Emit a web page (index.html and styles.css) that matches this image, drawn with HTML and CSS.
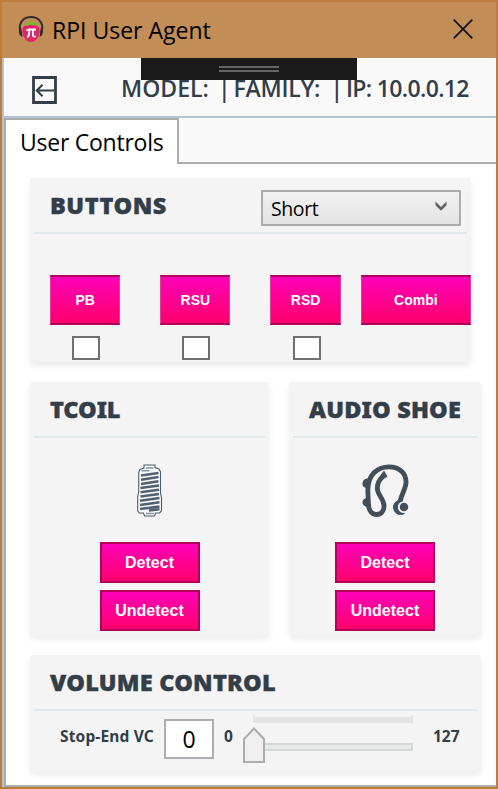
FILE: index.html
```html
<!DOCTYPE html>
<html lang="en">
<head>
<meta charset="utf-8">
<title>RPI User Agent</title>
<link rel="stylesheet" href="styles.css">
</head>
<body>
<div class="window">
  <header class="titlebar">
    <svg class="app-icon" width="26" height="28" viewBox="0 0 26 28">
      <path d="M3 18C-1 9 5 2 13 2s14 7 10 16" fill="none" stroke="#33302d" stroke-width="2"/>
      <path d="M3 12.500C0 14 .5 21 4.500 22zM23 12.500c3 1.500 2.500 8.500-1.500 9.500z" fill="#292b2c"/>
      <path d="M4.500 14c0-3 4-4 8.500-4s8.500 1 8.500 4c1 7-4 13-8.500 13S3.500 21 4.500 14z" fill="#e02468"/>
      <path d="M6 9.500l3-2 1 .3L13 5.500l3 2.300 1-.3 3 2-3.500 1-3.500-1-3.500 1z" fill="#77b82e"/>
      <path d="M8 15q1-1.500 3-1.500h7v2h-2v4.500q0 1.500 2 .5v1.500q-4 1.500-4-2v-4.500h-1.700q0 4.500-1.500 7H8.700Q10.500 19.500 10.400 15.500 9 15.500 8.500 16.300z" fill="#fff"/>
    </svg>
    <h1 class="title">RPI User Agent</h1>
    <svg class="close" width="20" height="20" viewBox="0 0 20 20"><path d="M.7.7l18.600 18.600M19.300.7L.7 19.300" stroke="#111" stroke-width="1.700"/></svg>
  </header>
  <div class="client">
    <div class="infobar">
      <svg class="back" width="25" height="28" viewBox="0 0 25 28"><path d="M1.500 1.500h22v25h-22z" fill="none" stroke="#333e48" stroke-width="2.800"/><path d="M4.500 14.500H22M10.500 8.800L4.800 14.500l5.700 5.700" fill="none" stroke="#333e48" stroke-width="2"/></svg>
      <div class="info"><span class="model">MODEL:</span><span class="bar">|</span><span class="family">FAMILY:</span><span class="bar">|</span><span class="ip">IP: 10.0.0.12</span></div>
      <div class="grip"><i></i><i></i></div>
    </div>
    <div class="tabs"><div class="tab"><span>User Controls</span></div><div class="tab-rest"></div></div>
    <main class="page">
      <section class="card buttons-card">
        <div class="card-head"><h2 class="h-buttons">BUTTONS</h2>
          <div class="select"><span>Short</span><svg width="12" height="10" viewBox="0 0 12 10"><path d="M.5.5L6 6l5.500-5.500V4.200L6 9.800.5 4.200z" fill="#606060"/></svg></div>
        </div>
        <div class="button-row">
          <div class="cell"><button class="btn">PB</button><span class="check"></span></div>
          <div class="cell"><button class="btn">RSU</button><span class="check"></span></div>
          <div class="cell"><button class="btn">RSD</button><span class="check"></span></div>
          <div class="cell wide"><button class="btn">Combi</button></div>
        </div>
      </section>
      <div class="pair">
        <section class="card device">
          <div class="card-head"><h2 class="h-tcoil">TCOIL</h2></div>
          <svg class="device-icon" width="26" height="53" viewBox="0 0 26 53">
            <path d="M7 1h11v2.500l4 1.500 1.500 3V29l1 5v13l-2 2h-4l-1 3H7.500l-1-3h-4L.7 47V33l1-5V8.500L3 5.500 7 4z" fill="#f8f9fa" stroke="#4d5c6b" stroke-width="1.100"/>
            <path d="M9 4h7.500M9 49.500h8M4.500 6.800h8" stroke="#8995a4" stroke-width="1.400"/>
            <path d="M4 11.500l17.500-2.600M4 15.700l17.500-2.600M4 19.900l17.500-2.600M3.500 24.100l18.500-2.600M3.500 28.300l18.500-2.600M3.500 32.500l18.500-2.600M3 36.700l19.500-2.600M3 40.900l19.500-2.600M3 45.100l19.500-2.600M12 46.500l10.500-1.300" stroke="#526171" stroke-width="2.500"/>
          </svg>
          <button class="btn action">Detect</button><button class="btn action">Undetect</button>
        </section>
        <section class="card device shoe">
          <div class="card-head"><h2 class="h-shoe">AUDIO SHOE</h2></div>
          <svg class="device-icon" width="48" height="53" viewBox="0 0 48 53">
            <path d="M22 11C18 15.500 14.500 19 15.500 26c1 6 6.500 9 6.500 16 0 5-3 8.500-7.500 8.500S7 47 6.500 41L5.800 26C6 11 15 2.800 27 2.800c11 0 17.500 7 17 16-.4 6.500-4.500 11-6 19" fill="none" stroke="#434e58" stroke-width="4.800"/>
            <path d="M19 10.500l3-4 3.500 6-4 2.500zM6 14.500C2 14.500.5 17 .5 20S3 24 6 24zM6 34C2.500 34 .5 36 .5 38.500S3 43 7 43z" fill="#434e58"/>
            <path d="M36.500 36.500c-3 1-5 3.500-5 6.500 0 6 6 9.500 11 6.500-4 0-7-2.500-7-6.500 0-3 2-5 5-6z" fill="#434e58" stroke="#434e58"/>
            <circle cx="42" cy="43" r="5" fill="#434e58" stroke="#f4f4f4" stroke-width="1.500"/>
          </svg>
          <button class="btn action">Detect</button><button class="btn action">Undetect</button>
        </section>
      </div>
      <section class="card volume">
        <div class="card-head"><h2 class="h-volume">VOLUME CONTROL</h2></div>
        <div class="volume-row">
          <span class="vlabel">Stop-End VC</span><div class="number">0</div><span class="min">0</span>
          <svg class="slider" width="170" height="50" viewBox="0 0 170 50"><path d="M10 0h2v2h156V0h2v8H10z" fill="#e3e3e3"/><path d="M11 29h158v6H11z" fill="#e5e9e8" stroke="#d6d8d8" stroke-width="2"/><path d="M1 24L11 13.500 21 24v23H1z" fill="#efefef" stroke="#acacac" stroke-width="2"/></svg>
          <span class="max">127</span>
        </div>
      </section>
    </main>
  </div>
</div>
</body>
</html>
```
FILE: styles.css
```css
* { box-sizing: border-box; }
body { margin: 0; font-family: "Noto Sans", "Open Sans", sans-serif; color: #000; }
.window { width: 498px; height: 789px; border: 2px solid #bf7d3c; background: #fff; overflow: hidden; }
.titlebar { height: 56px; background: #c28d57; display: flex; align-items: center; padding: 0 23px 0 16px; }
.app-icon { margin-top: -2px; }
.title { margin: 0 auto 0 8px; font-size: 23px; font-weight: 400; line-height: 57px; white-space: nowrap; font-family: "Open Sans"; }
.close { margin-top: -2px; }
.client { height: 729px; border-left: 2px solid #b8c2d0; display: flex; flex-direction: column; }
.infobar { position: relative; height: 60px; flex: none; background: #f9f9f9; border-bottom: 2px solid #b8c2d0; display: flex; padding-left: 28px; }
.back { margin-top: 18px; }
.info { display: flex; margin-left: 64px; font-size: 23px; line-height: 60px; font-weight: 600; color: #333e48; white-space: nowrap; font-family: "Open Sans"; }
.model { width: 97px; }
.family { width: 97px; letter-spacing: -.2px; }
.bar { width: 15.500px; }
.ip { letter-spacing: -.65px; }
.grip { position: absolute; left: 137px; top: 0; width: 216px; height: 22px; background: #1a1a1a; display: flex; flex-direction: column; align-items: center; gap: 2px; padding-top: 8px; }
.grip i { width: 60px; height: 2px; background: #666; }
.tabs { height: 46px; flex: none; display: flex; background: #f9f9f9; }
.tab { width: 175px; background: #fff; border: 2px solid #acacac; border-bottom: 0; padding-left: 14px; font-size: 23px; letter-spacing: -.25px; line-height: 44px; white-space: nowrap; font-family: "Open Sans"; }
.tab-rest { flex: 1; border-bottom: 2px solid #acacac; }
.page { flex: 1; border: solid #acacac; border-width: 0 0 2px 2px; padding: 14px 15px 0 24px; }
.card { background: #f4f4f4; border-radius: 3px; box-shadow: 0 4px 7px rgba(0,0,0,.08); }
.card-head { height: 56px; margin: 0 4px; padding: 0 6px 0 16px; border-bottom: 2px solid #e1e8ec; display: flex; justify-content: space-between; }
h2 { margin: 0; font-size: 23.500px; line-height: 54px; font-weight: 900; color: #333e48; white-space: nowrap; -webkit-text-stroke: .4px #333e48; }
.h-buttons { letter-spacing: .5px; }
.h-tcoil { letter-spacing: -.1px; }
.h-shoe { letter-spacing: .15px; }
.h-volume { letter-spacing: .2px; }
.buttons-card { width: 441px; height: 184px; }
.select { width: 200px; height: 36px; margin-top: 12px; border: 2px solid #acacac; background: linear-gradient(#f0f0f0,#e4e4e4); display: flex; justify-content: space-between; padding: 0 12px 0 8px; font-size: 19.500px; letter-spacing: -.4px; line-height: 34px; font-family: "Open Sans"; }
.select svg { margin-top: 9px; }
.button-row { display: flex; padding: 41px 0 0 20px; gap: 40px; }
.cell { width: 70.300px; display: flex; flex-direction: column; align-items: center; }
.cell.wide { width: 110.500px; margin-left: -20px; }
.btn { flex: none; width: 100%; height: 50px; padding: 0; border: solid #b3005b; border-width: 2px 1px; border-left-color: #e23b9a; border-right-color: #e23b9a; background: linear-gradient(#ff00b8,#ff006c); color: #fff; font: bold 14px "Liberation Sans", sans-serif; }
.check { width: 28px; height: 24px; margin: 11px 0 0 2px; background: #fff; border: 2px solid #707070; }
.pair { display: flex; justify-content: space-between; margin-top: 20px; }
.device { width: 239px; height: 253px; display: flex; flex-direction: column; align-items: center; }
.device .card-head { align-self: stretch; flex: none; }
.shoe { width: 192px; }
.device-icon { flex: none; margin: 26px 0 25px; }
.shoe .device-icon { margin-left: 1px; margin-right: 0; }
.btn.action { width: 100px; height: 41px; border: 2px solid #b3005b; margin-bottom: 7px; font-size: 16px; }
.volume { margin-top: 20px; height: 116px; }
.volume-row { display: flex; padding-left: 30px; color: #333e48; font-size: 15.500px; font-weight: 700; line-height: 50px; white-space: nowrap; }
.vlabel { width: 104px; letter-spacing: .15px; }
.number { width: 50px; height: 40px; margin-top: 8px; border: 2px solid #abadb3; background: #fff; color: #000; font: 400 23px/37px "Open Sans"; text-align: center; }
.min { margin-left: 10px; width: 19px; }
.slider { margin-top: 4px; }
.max { margin-left: 20px; }
```
